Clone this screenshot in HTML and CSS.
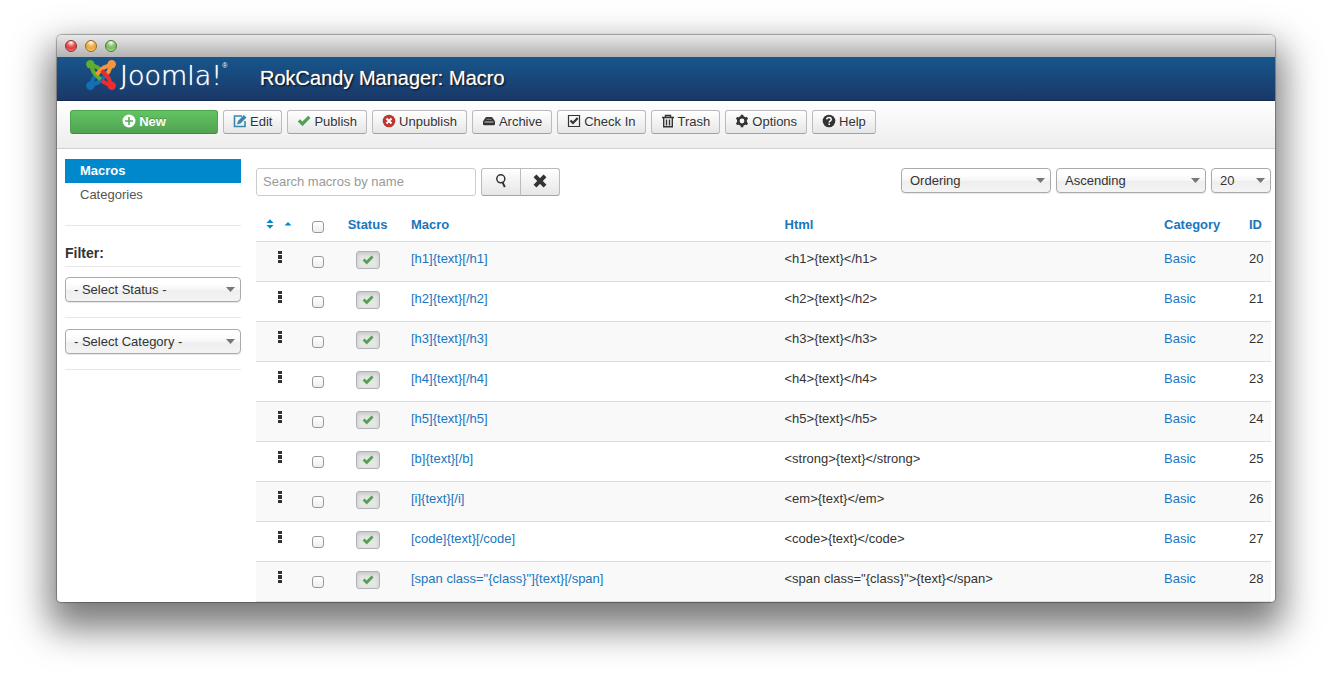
FILE: index.html
```html
<!DOCTYPE html>
<html lang="en">
<head>
  <meta charset="UTF-8">
  <meta name="viewport" content="width=device-width, initial-scale=1.0">
  <title>RokCandy Manager: Macro</title>
  <link rel="stylesheet" href="styles.css">
</head>
<body>

<svg class="sprite" aria-hidden="true">
  <symbol id="icon-check" viewBox="0 0 14 14">
    <path d="M.8 7.600 3 5.200 5.400 7.500 11.200 1.800 13.500 4 5.500 12.200Z" fill="currentColor"/>
  </symbol>
  <symbol id="icon-menu" viewBox="0 0 4 12">
    <path d="M0 0h4v3H0zM0 4h4v4H0zM0 9h4v3H0z" fill="currentColor"/>
  </symbol>
  <symbol id="logo-arm" viewBox="0 0 30 30">
    <path d="M5 5 6.500 9.500Q7 12 9 14L14.500 19.500M5 5 9.500 6.500Q12 7 14 9.500" fill="none" stroke="currentColor" stroke-width="4"/>
    <circle cx="4.300" cy="4.300" r="4.200" fill="currentColor"/>
  </symbol>
</svg>

<div class="window">
  <div class="titlebar">
    <span class="light red"></span>
    <span class="light yellow"></span>
    <span class="light green"></span>
  </div>

  <header class="header">
    <a class="logo" href="#">
      <svg class="logo-mark" viewBox="0 0 30 30">
        <use href="#logo-arm" color="#1470b5" transform="rotate(270 15 15)"/>
        <use href="#logo-arm" color="#5fae2e"/>
        <use href="#logo-arm" color="#f7943c" transform="rotate(90 15 15)"/>
        <use href="#logo-arm" color="#ee2b2d" transform="rotate(180 15 15)"/>
      </svg>
      <span class="logo-text">Joomla!</span><sup class="logo-reg">®</sup>
    </a>
    <h1 class="page-title">RokCandy Manager: Macro</h1>
  </header>

  <div class="toolbar">
    <button class="btn btn-new">
      <svg class="icon" viewBox="0 0 14 14"><circle cx="7" cy="7" r="6.500" fill="#fff"/><path d="M7 3v8M3 7h8" stroke="#56b056" stroke-width="1.600"/></svg>New
    </button>
    <button class="btn">
      <svg class="icon" viewBox="0 0 14 14"><path d="M9 2H1.500v10.500H12V7" fill="none" stroke="#3a87ad" stroke-width="1.600"/><path d="M4 10.500 5 7l5.800-6L13.500 3.500 7.500 9.500Z" fill="#3a87ad"/></svg>Edit
    </button>
    <button class="btn">
      <svg class="icon icon-green"><use href="#icon-check"/></svg>Publish
    </button>
    <button class="btn">
      <svg class="icon" viewBox="0 0 14 14"><circle cx="7" cy="7" r="6.300" fill="#bd362f"/><path d="M4.500 4.500 9.500 9.500M9.500 4.500 4.500 9.500" stroke="#fff" stroke-width="2"/></svg>Unpublish
    </button>
    <button class="btn">
      <svg class="icon" viewBox="0 0 14 14"><path d="M1 7.500 3.500 3.500Q4 3 5 3H9Q10 3 10.500 3.500L13 7.500V10Q13 11.300 11.700 11.300H2.300Q1 11.300 1 10Z" fill="#333"/><path d="M2.500 8H11.500" fill="none" stroke="#ddd" stroke-width=".9"/><path d="M4.500 5.300h5" stroke="#999" stroke-width=".8"/></svg>Archive
    </button>
    <button class="btn">
      <svg class="icon" viewBox="0 0 14 14"><path d="M1.500 1.500h11v11h-11z" fill="none" stroke="#333" stroke-width="1.200"/><path d="M3.500 6.500 6 9l4.700-5" fill="none" stroke="#333" stroke-width="2.200"/></svg>Check In
    </button>
    <button class="btn">
      <svg class="icon" viewBox="0 0 14 14"><path d="M1 3.500h12M4.500 3V1.500h5V3M2.700 4v8.700h8.600V4M5.500 5.500v6M8.500 5.500v6" fill="none" stroke="#333" stroke-width="1.400"/></svg>Trash
    </button>
    <button class="btn">
      <svg class="icon" viewBox="0 0 14 14"><circle cx="7" cy="7" r="3.700" fill="none" stroke="#333" stroke-width="2.600"/><path d="M7 .7v2.600M7 10.700v2.600M1.500 3.900l2.300 1.300M10.200 8.800l2.300 1.300M1.500 10.100l2.300-1.300M10.200 5.200l2.300-1.300" stroke="#333" stroke-width="2.600"/></svg>Options
    </button>
    <button class="btn">
      <svg class="icon" viewBox="0 0 14 14"><circle cx="7" cy="7" r="6.300" fill="#333"/><path d="M4.700 5.400Q4.900 3.500 7 3.500T9.300 5.300Q9.300 6.300 8.200 7 7.200 7.500 7.200 8.500" fill="none" stroke="#fff" stroke-width="1.500"/><path d="M6.400 9.500h1.600v1.500H6.400z" fill="#fff"/></svg>Help
    </button>
  </div>

  <div class="content">
    <aside class="sidebar">
      <nav class="submenu">
        <a class="active" href="#">Macros</a>
        <a href="#">Categories</a>
      </nav>
      <hr>
      <h4>Filter:</h4>
      <hr>
      <select class="select" aria-label="Status filter">
        <option>- Select Status -</option>
      </select>
      <hr>
      <select class="select" aria-label="Category filter">
        <option>- Select Category -</option>
      </select>
      <hr>
    </aside>

    <main class="main">
      <div class="filter-bar">
        <input class="search" type="text" placeholder="Search macros by name" aria-label="Search macros by name">
        <div class="btn-group">
          <button class="btn" aria-label="Search">
            <svg class="icon" viewBox="0 0 14 14"><circle cx="6.800" cy="4.800" r="4" fill="none" stroke="#333" stroke-width="1.500"/><path d="M8.500 8.200 10.800 13.200" stroke="#333" stroke-width="2"/></svg>
          </button>
          <button class="btn" aria-label="Clear">
            <svg class="icon" viewBox="0 0 14 14"><path d="M2 1.800 12 12.200M12 1.800 2 12.200" stroke="#333" stroke-width="4"/></svg>
          </button>
        </div>
        <div class="ordering">
          <select class="select" aria-label="Order by"><option>Ordering</option></select>
          <select class="select" aria-label="Direction"><option>Ascending</option></select>
          <select class="select select-mini" aria-label="Limit"><option>20</option></select>
        </div>
      </div>

      <table class="macros">
        <thead>
          <tr>
            <th class="col-order">
              <a class="sort" href="#" aria-label="Ordering">
                <svg width="8" height="10" viewBox="0 0 8 10"><path d="M.5 4 4 .3 7.500 4ZM.5 6 4 9.700 7.500 6Z" fill="#08c"/></svg>
                <svg width="8" height="10" viewBox="0 0 8 10"><path d="M.5 6.500 4 3 7.500 6.500Z" fill="#08c"/></svg>
              </a>
            </th>
            <th class="col-check"><input type="checkbox" aria-label="Check all"></th>
            <th class="col-status"><a href="#">Status</a></th>
            <th class="col-macro"><a href="#">Macro</a></th>
            <th><a href="#">Html</a></th>
            <th class="col-category"><a href="#">Category</a></th>
            <th class="col-id"><a href="#">ID</a></th>
          </tr>
        </thead>
        <tbody id="macroRows"></tbody>
      </table>
    </main>
  </div>
</div>

<script>
  const macros = [
    [20, '[h1]{text}[/h1]', '<h1>{text}</h1>'],
    [21, '[h2]{text}[/h2]', '<h2>{text}</h2>'],
    [22, '[h3]{text}[/h3]', '<h3>{text}</h3>'],
    [23, '[h4]{text}[/h4]', '<h4>{text}</h4>'],
    [24, '[h5]{text}[/h5]', '<h5>{text}</h5>'],
    [25, '[b]{text}[/b]', '<strong>{text}</strong>'],
    [26, '[i]{text}[/i]', '<em>{text}</em>'],
    [27, '[code]{text}[/code]', '<code>{text}</code>'],
    [28, '[span class="{class}"]{text}[/span]', '<span class="{class}">{text}</span>']
  ];
  const macroRows = document.getElementById('macroRows');

  macros.forEach(([id, macro, html]) => {
    const row = document.createElement('tr');
    row.innerHTML = `
      <td><svg class="icon-menu"><use href="#icon-menu"/></svg></td>
      <td><input type="checkbox" aria-label="Select macro ${id}"></td>
      <td><button class="state" aria-label="Published"><svg><use href="#icon-check"/></svg></button></td>
      <td><a href="#"></a></td>
      <td></td>
      <td><a href="#">Basic</a></td>
      <td class="id">${id}</td>
    `;
    // set as text so the markup is shown, not parsed
    row.cells[3].firstChild.textContent = macro;
    row.cells[4].textContent = html;
    macroRows.appendChild(row);
  });
</script>

</body>
</html>
```
FILE: styles.css
```css
* {
  box-sizing: border-box;
}

body {
  margin: 0;
  padding: 35px 57px 79px;
  background: #fff;
  color: #333;
  font-family: "Liberation Sans", Arial, sans-serif;
  font-size: 13px;
  line-height: 18px;
}

a {
  color: #1a76bd;
  text-decoration: none;
}

button, input, select {
  font-family: inherit;
  font-size: 13px;
  color: #333;
}

.sprite {
  position: absolute;
  width: 0;
  height: 0;
}

.window {
  overflow: hidden;
  background: #fff;
  border-radius: 5px 5px 4px 4px;
  box-shadow: 0 0 1px 1px rgba(0, 0, 0, 0.3), 0 19px 36px 8px rgba(0, 0, 0, 0.52);
}

.titlebar {
  display: flex;
  align-items: center;
  gap: 8px;
  height: 22px;
  padding-left: 8px;
  background: linear-gradient(#e8e8e8, #b2b2b2);
}

.light {
  width: 12px;
  height: 12px;
  border: 1px solid #555;
  border-radius: 50%;
}

.red {
  border-color: #8c2f30;
  background: radial-gradient(circle at 50% 15%, #fff 0, #ee6a6c 35%, #e0383c 60%, #ffa0a0 100%);
}

.yellow {
  border-color: #91662a;
  background: radial-gradient(circle at 50% 15%, #fff 0, #f0b95c 35%, #eda63a 60%, #ffe69a 100%);
}

.green {
  border-color: #4b7a37;
  background: radial-gradient(circle at 50% 15%, #fff 0, #94cc7c 35%, #78b95e 60%, #d2f5b4 100%);
}

.header {
  display: flex;
  align-items: center;
  height: 44px;
  padding: 0 29px 2px;
  background: linear-gradient(#17568c, #1a3867);
  border-bottom: 1px solid #142d53;
}

.logo {
  display: flex;
  width: 174px;
  height: 36px;
  color: #fff;
}

.logo-mark {
  width: 30px;
  height: 30px;
}

.logo-text {
  margin-left: 4px;
  font-family: "DejaVu Sans", sans-serif;
  font-size: 27px;
  font-weight: 200;
  line-height: 32px;
  text-shadow: 0 0 1px #fff;
}

.logo-reg {
  font-size: 7px;
  line-height: 12px;
}

.page-title {
  margin: 0;
  color: #fff;
  font-size: 20px;
  font-weight: normal;
  line-height: 24px;
  text-shadow: 1px 1px 2px #000, 0 0 1px #fff;
}

.toolbar {
  display: flex;
  gap: 5px;
  height: 48px;
  padding: 9px 13px;
  background: linear-gradient(#fff, #ededed);
  border-bottom: 1px solid #d0d0d0;
}

.btn {
  display: flex;
  align-items: center;
  justify-content: center;
  gap: 3px;
  height: 24px;
  padding: 0 9px 2px;
  border: 1px solid #bbb;
  border-bottom-color: #a2a2a2;
  border-radius: 3px;
  background: linear-gradient(#fff, #e6e6e6);
  text-shadow: 0 1px 1px rgba(255, 255, 255, 0.75);
}

.btn-new {
  width: 148px;
  border-color: #4ea34e #4ea34e #418841;
  background: linear-gradient(#62c462, #51a351);
  color: #fff;
  font-weight: bold;
  text-shadow: 0 -1px 0 rgba(0, 0, 0, 0.25);
}

.icon {
  width: 14px;
  height: 14px;
}

.icon-green {
  color: #51a351;
}

.content {
  display: flex;
  gap: 15px;
  padding: 10px 4px 0 8px;
}

.sidebar {
  width: 176px;
  flex-shrink: 0;
}

.submenu a {
  display: block;
  height: 24px;
  padding: 3px 15px;
  color: #555;
}

.submenu .active {
  background: #08c;
  color: #fff;
  font-weight: bold;
}

.sidebar hr {
  margin: 15px 0 11px;
  border: 0;
  border-top: 1px solid #e8e8e8;
}

.sidebar .submenu + hr {
  margin: 18px 0;
}

.sidebar h4 {
  margin: 0;
  font-size: 14px;
}

.sidebar h4 + hr {
  margin: 4px 0 10px;
}

.select {
  display: block;
  width: 150px;
  height: 25px;
  padding: 0 8px;
  appearance: none;
  border: 1px solid #aaa;
  border-radius: 4px;
  background:
    url('data:image/svg+xml,<svg xmlns="http://www.w3.org/2000/svg" width="9" height="5"><path d="M0 0h9L4.500 5z" fill="%23777"/></svg>') no-repeat right 5px center,
    linear-gradient(#fff 20%, #f6f6f6 50%, #eee 52%, #f4f4f4 100%);
  box-shadow: 0 1px 1px rgba(0, 0, 0, 0.1);
}

.sidebar .select {
  width: 100%;
}

.main {
  flex: 1;
  padding-top: 9px;
}

.filter-bar {
  display: flex;
  margin-bottom: 12px;
}

.search {
  width: 220px;
  height: 28px;
  padding: 3px 6px 5px;
  border: 1px solid #ccc;
  border-radius: 3px;
}

.search::placeholder {
  color: #999;
}

.btn-group {
  display: flex;
  margin-left: 5px;
}

.btn-group .btn {
  width: 40px;
  height: 28px;
  padding-bottom: 3px;
}

.btn-group .btn:first-child {
  border-radius: 3px 0 0 3px;
}

.btn-group .btn:last-child {
  margin-left: -1px;
  border-radius: 0 3px 3px 0;
}

.ordering {
  display: flex;
  gap: 5px;
  margin-left: auto;
}

.select-mini {
  width: 60px;
}

.macros {
  width: 100%;
  border-spacing: 0;
  border-bottom: 1px solid #ddd;
  table-layout: fixed;
}

.macros th {
  height: 33px;
  padding: 8px 8px 0;
  text-align: left;
  vertical-align: top;
}

.macros td {
  height: 40px;
  padding: 8px 8px 0;
  border-top: 1px solid #ddd;
  vertical-align: top;
}

.macros tbody tr:nth-child(odd) {
  background: #f9f9f9;
}

.macros .col-order {
  width: 48px;
}

.macros .col-check {
  width: 28px;
}

.macros .col-status {
  width: 71px;
  text-align: center;
}

.macros .col-macro {
  width: 36.8%;
}

.macros .col-category {
  width: 85px;
}

.macros .col-id {
  width: 30px;
}

.sort {
  display: flex;
  gap: 10px;
  padding: 3px 2px;
}

.macros input {
  display: block;
  width: 12px;
  height: 12px;
  margin: 5px 0 0;
  appearance: none;
  border: 1px solid #999;
  border-radius: 3px;
  background: linear-gradient(#fff, #eee);
}

.macros td input {
  margin-top: 6px;
}

.icon-menu {
  display: block;
  width: 4px;
  height: 12px;
  margin: 1px auto 0;
}

.state {
  display: flex;
  align-items: center;
  justify-content: center;
  width: 24px;
  height: 18px;
  margin: 1px auto 0;
  padding: 0;
  border: 1px solid #b3b3b3;
  border-radius: 3px;
  background: #e6e6e6;
  box-shadow: inset 0 2px 4px rgba(0, 0, 0, 0.15);
  color: #51a351;
}

.state svg {
  width: 12px;
  height: 12px;
}

.macros .col-id, .id {
  padding-right: 0;
}
```
